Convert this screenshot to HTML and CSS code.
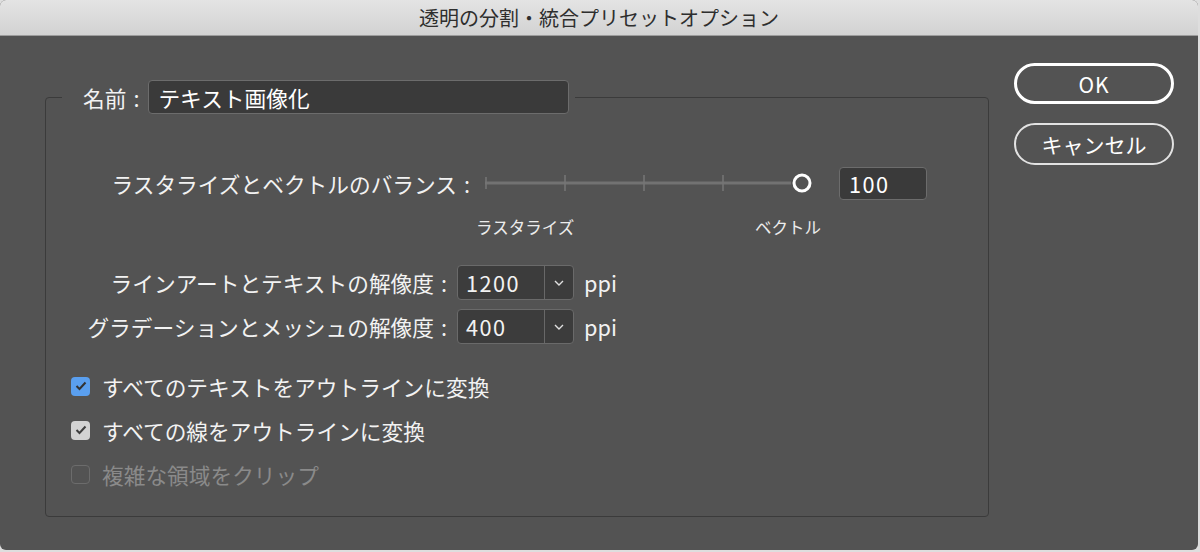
FILE: index.html
```html
<!DOCTYPE html>
<html lang="ja">
<head>
    <meta charset="UTF-8">
    <title>透明の分割・統合プリセットオプション</title>
    <link rel="stylesheet" href="styles.css">
</head>
<body>
    <div class="window">
        <div class="titlebar">透明の分割・統合プリセットオプション</div>

        <div class="content">
            <fieldset class="preset">
                <legend class="name-field">
                    <label for="preset-name">名前<span class="colon">:</span></label>
                    <input id="preset-name" class="text-field" type="text" value="テキスト画像化">
                </legend>

                <div class="balance-row">
                    <span class="row-label balance-label">ラスタライズとベクトルのバランス<span class="colon">:</span></span>
                    <svg class="slider" width="328" height="24" viewBox="0 0 328 24">
                        <line x1="0" y1="12" x2="306" y2="12" stroke="#727272" stroke-width="3"/>
                        <line x1="1" y1="6" x2="1" y2="18" stroke="#767676" stroke-width="1.5"/>
                        <line x1="80" y1="4" x2="80" y2="20" stroke="#767676" stroke-width="1.5"/>
                        <line x1="159" y1="4" x2="159" y2="20" stroke="#767676" stroke-width="1.5"/>
                        <line x1="238" y1="4" x2="238" y2="20" stroke="#767676" stroke-width="1.5"/>
                        <circle cx="317" cy="12" r="8" fill="#535353" stroke="#ffffff" stroke-width="3"/>
                    </svg>
                    <input class="text-field num-field" type="text" value="100">
                </div>

                <div class="scale-labels">
                    <span class="scale-start">ラスタライズ</span>
                    <span>ベクトル</span>
                </div>

                <div class="res-row first">
                    <span class="row-label res-label">ラインアートとテキストの解像度<span class="colon">:</span></span>
                    <div class="select">
                        <span class="select-value">1200</span>
                        <span class="select-arrow">
                            <svg width="10" height="6" viewBox="0 0 10 6"><polyline points="1,1 5,5 9,1" fill="none" stroke="#e0e0e0" stroke-width="1.4"/></svg>
                        </span>
                    </div>
                    <span class="unit">ppi</span>
                </div>

                <div class="res-row">
                    <span class="row-label res-label">グラデーションとメッシュの解像度<span class="colon">:</span></span>
                    <div class="select">
                        <span class="select-value">400</span>
                        <span class="select-arrow">
                            <svg width="10" height="6" viewBox="0 0 10 6"><polyline points="1,1 5,5 9,1" fill="none" stroke="#e0e0e0" stroke-width="1.4"/></svg>
                        </span>
                    </div>
                    <span class="unit">ppi</span>
                </div>

                <div class="checks">
                    <div class="check-row">
                        <span class="checkbox checkbox-focus">
                            <svg width="12" height="10" viewBox="0 0 12 10"><polyline points="1.5,5 4.5,8 10.5,1.5" fill="none" stroke="#333" stroke-width="2"/></svg>
                        </span>
                        <span>すべてのテキストをアウトラインに変換</span>
                    </div>
                    <div class="check-row">
                        <span class="checkbox checkbox-on">
                            <svg width="12" height="10" viewBox="0 0 12 10"><polyline points="1.5,5 4.5,8 10.5,1.5" fill="none" stroke="#3e3e3e" stroke-width="2"/></svg>
                        </span>
                        <span>すべての線をアウトラインに変換</span>
                    </div>
                    <div class="check-row disabled">
                        <span class="checkbox checkbox-off"></span>
                        <span>複雑な領域をクリップ</span>
                    </div>
                </div>
            </fieldset>

            <div class="buttons">
                <button class="btn btn-default">OK</button>
                <button class="btn">キャンセル</button>
            </div>
        </div>
    </div>
</body>
</html>
```

FILE: styles.css
```css
html, body {
    margin: 0;
    padding: 0;
    background-color: #dedede;
}
body {
    font-family: "Noto Sans CJK JP", "Noto Sans", sans-serif;
    color: #f2f2f2;
}
.window {
    width: 1198px;
    height: 550px;
    background-color: #535353;
    border-radius: 6px;
    overflow: hidden;
}
.titlebar {
    height: 35px;
    line-height: 35px;
    text-align: center;
    font-size: 20px;
    color: #2e2e2e;
    background: linear-gradient(#e4e4e4, #d2d2d2);
    border-bottom: 1px solid #9c9c9c;
}
.content {
    display: flex;
    align-items: flex-start;
}
.colon {
    margin-left: 7px;
}
.preset {
    margin: 44px 0 0 45px;
    padding: 0 0 20px 16px;
    width: 926px;
    min-inline-size: 0;
    border: 1px solid #3b3b3b;
    border-radius: 4px;
}
.name-field {
    display: flex;
    align-items: center;
    padding: 0 6px 0 21px;
    font-size: 21.7px;
}
.name-field label {
    margin-right: 9px;
}
.text-field {
    box-sizing: border-box;
    height: 34px;
    padding: 0 9px;
    font-family: inherit;
    font-size: 21.7px;
    color: #ffffff;
    background-color: #3a3a3a;
    border: 1px solid #6c6c6c;
    border-radius: 4px;
    outline: none;
}
#preset-name {
    width: 421px;
}
.row-label {
    text-align: right;
    font-size: 21.7px;
    white-space: nowrap;
}
.balance-row {
    display: flex;
    align-items: center;
    margin-top: 52px;
    height: 34px;
}
.balance-label {
    width: 408px;
}
.slider {
    display: block;
    margin-left: 15px;
}
.num-field {
    width: 88px;
    height: 33px;
    margin-left: 26px;
    letter-spacing: 1.5px;
}
.scale-labels {
    display: flex;
    margin: 15px 0 0 414px;
    font-size: 16.5px;
    line-height: 24px;
    color: #ececec;
}
.scale-start {
    width: 279px;
}
.res-row {
    display: flex;
    align-items: center;
    margin-top: 9px;
    height: 35px;
}
.res-row.first {
    margin-top: 26px;
}
.res-label {
    width: 385px;
}
.select {
    box-sizing: border-box;
    display: flex;
    width: 117px;
    height: 35px;
    margin-left: 10px;
    background-color: #3c3c3c;
    border: 1px solid #6a6a6a;
    border-radius: 4px;
}
.select-value {
    width: 86px;
    padding-left: 8px;
    box-sizing: border-box;
    font-size: 21.7px;
    line-height: 33px;
    letter-spacing: 1.5px;
}
.select-arrow {
    flex: 1;
    display: flex;
    align-items: center;
    justify-content: center;
    border-left: 1px solid #686868;
}
.select-arrow svg {
    display: block;
}
.unit {
    margin-left: 10px;
    font-size: 21.7px;
}
.checks {
    margin-top: 20px;
}
.check-row {
    display: flex;
    align-items: center;
    height: 44px;
    padding-left: 9px;
    font-size: 21.7px;
}
.check-row.disabled {
    color: #8a8a8a;
}
.checkbox {
    box-sizing: border-box;
    width: 19px;
    height: 19px;
    margin-right: 12px;
    border-radius: 4px;
    display: flex;
    align-items: center;
    justify-content: center;
}
.checkbox-focus {
    background-color: #5a9fef;
}
.checkbox-on {
    background-color: #d3d3d3;
}
.checkbox-off {
    border: 1.5px solid #6c6c6c;
}
.buttons {
    display: flex;
    flex-direction: column;
    margin: 27px 0 0 25px;
}
.btn {
    box-sizing: border-box;
    width: 160px;
    height: 42px;
    font-family: inherit;
    font-size: 21px;
    color: #ffffff;
    background: transparent;
    border: 2px solid #e2e2e2;
    border-radius: 21px;
    cursor: pointer;
}
.btn-default {
    height: 41px;
    border: 3px solid #ffffff;
    margin-bottom: 19px;
    letter-spacing: 1px;
}
```
